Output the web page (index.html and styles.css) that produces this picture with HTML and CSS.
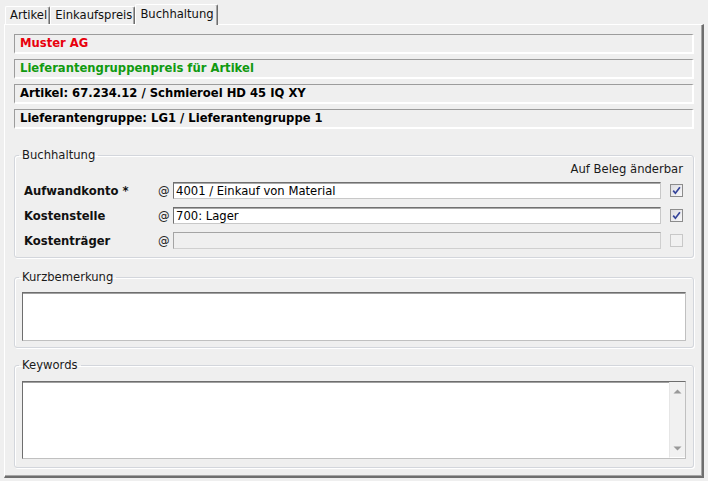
FILE: index.html
```html
<!DOCTYPE html>
<html lang="de">
<head>
    <meta charset="UTF-8">
    <title>Buchhaltung</title>
    <link rel="stylesheet" href="styles.css">
</head>
<body>
    <div class="tabs">
        <div class="tab">Artikel</div>
        <div class="tab">Einkaufspreis</div>
        <div class="tab tab-active">Buchhaltung</div>
    </div>

    <div class="panel">
        <div class="info info-red">Muster AG</div>
        <div class="info info-green">Lieferantengruppenpreis für Artikel</div>
        <div class="info">Artikel: 67.234.12 / Schmieroel HD 45 IQ XY</div>
        <div class="info">Lieferantengruppe: LG1 / Lieferantengruppe 1</div>

        <fieldset class="group group-booking">
            <legend>Buchhaltung</legend>
            <div class="booking-head">Auf Beleg änderbar</div>

            <div class="booking-row">
                <span class="booking-label">Aufwandkonto *</span>
                <span class="booking-at">@</span>
                <input class="field" type="text" value="4001 / Einkauf von Material">
                <span class="check check-on">
                    <svg width="11" height="11" viewBox="0 0 11 11"><path d="M2.2 5.6 L4.4 8.2 L8.9 2.2" fill="none" stroke="#34449a" stroke-width="1.7"/></svg>
                </span>
            </div>
            <div class="booking-row">
                <span class="booking-label">Kostenstelle</span>
                <span class="booking-at">@</span>
                <input class="field" type="text" value="700: Lager">
                <span class="check check-on">
                    <svg width="11" height="11" viewBox="0 0 11 11"><path d="M2.2 5.6 L4.4 8.2 L8.9 2.2" fill="none" stroke="#34449a" stroke-width="1.7"/></svg>
                </span>
            </div>
            <div class="booking-row">
                <span class="booking-label">Kostenträger</span>
                <span class="booking-at">@</span>
                <input class="field" type="text" value="" disabled>
                <span class="check check-off"></span>
            </div>
        </fieldset>

        <fieldset class="group group-note">
            <legend>Kurzbemerkung</legend>
            <textarea class="memo memo-short"></textarea>
        </fieldset>

        <fieldset class="group group-keywords">
            <legend>Keywords</legend>
            <div class="memo memo-scroll">
                <textarea class="memo-text"></textarea>
                <div class="scrollbar">
                    <svg width="9" height="5" viewBox="0 0 9 5"><path d="M0.5 4.5 L4.5 0.5 L8.5 4.5 Z" fill="#9a9a9a"/></svg>
                    <svg width="9" height="5" viewBox="0 0 9 5"><path d="M0.5 0.5 L4.5 4.5 L8.5 0.5 Z" fill="#9a9a9a"/></svg>
                </div>
            </div>
        </fieldset>
    </div>
</body>
</html>
```

FILE: styles.css
```css
* {
    margin: 0;
    padding: 0;
    box-sizing: border-box;
}

body {
    height: 100vh;
    display: flex;
    flex-direction: column;
    background: #efefef;
    font-family: "DejaVu Sans", Verdana, sans-serif;
    font-size: 11.6px;
    color: #000;
}

/* Reiter */
.tabs {
    display: flex;
    align-items: flex-end;
    height: 24px;
    padding: 4px 0 0 5px;
}

.tab {
    height: 18px;
    line-height: 16px;
    padding: 0 2px 0 4px;
    border-top: 1px solid #fff;
    border-left: 1px solid #fff;
    border-right: 1px solid #6e6e6e;
    box-shadow: inset -1px 0 0 #a6a6a6;
    border-radius: 2px 2px 0 0;
    color: #111;
}

.tab-active {
    height: 21px;
    margin-bottom: -1px;
    line-height: 18px;
    padding: 0 3px 0 4px;
    background: #efefef;
    position: relative;
    z-index: 1;
}

.panel {
    flex: 1;
    display: flex;
    flex-direction: column;
    margin: 0 4px 3px 4px;
    padding: 9px 8px 8px 9px;
    border-top: 1px solid #fff;
    border-left: 1px solid #fff;
    border-right: 2px solid #6e6e6e;
    border-bottom: 2px solid #6e6e6e;
    box-shadow: inset -1px -1px 0 #a6a6a6;
}

/* Kopfzeilen */
.info {
    height: 20px;
    line-height: 17px;
    margin-bottom: 5px;
    padding-left: 5px;
    border-top: 1px solid #9c9c9c;
    border-left: 1px solid #9c9c9c;
    border-right: 2px solid #fff;
    border-bottom: 2px solid #fff;
    font-weight: bold;
    white-space: nowrap;
}

.info-red {
    color: #e8000c;
}

.info-green {
    color: #109a10;
}

/* Gruppen */
.group {
    border: 1px solid #d3d6dc;
    border-radius: 3px;
    box-shadow: inset 1px 1px 0 #fff, 1px 1px 0 #fff;
    padding: 0 7px 8px 7px;
}

.group legend {
    margin-left: -3px;
    padding: 0 3px;
    line-height: 13px;
    color: #1a1a1a;
}

.group-booking {
    margin-top: 15px;
    padding: 1px 10px 8px 7px;
}

.booking-head {
    text-align: right;
    line-height: 13px;
    color: #1a1a1a;
    margin-bottom: 6px;
}

.booking-row {
    display: flex;
    align-items: center;
    height: 17px;
    margin-bottom: 8px;
}

.booking-row:last-child {
    margin-bottom: 0;
}

.booking-label {
    width: 136px;
    padding-left: 2px;
    font-weight: bold;
    color: #111;
}

.booking-at {
    width: 15px;
    color: #222;
}

.field {
    flex: 1;
    height: 17px;
    padding: 0 2px;
    font-family: inherit;
    font-size: 11.6px;
    color: #000;
    background: #fff;
    border: 1px solid;
    border-color: #707070 #c8c8c8 #c8c8c8 #707070;
    box-shadow: inset 0 1px 0 #a9a9a9;
    outline: none;
}

.field:disabled {
    background: #efefef;
    border-color: #a4a4a4 #cfcfcf #cfcfcf #a4a4a4;
    box-shadow: none;
}

.check {
    width: 13px;
    height: 13px;
    margin-left: 9px;
    display: flex;
    align-items: center;
    justify-content: center;
    border: 1px solid #8c8c8c;
    background: linear-gradient(135deg, #dcdce0, #f8f8fa);
}

.check-off {
    border-color: #c8c8c8;
    background: #f1f1f1;
}

/* Memofelder */
.memo {
    display: block;
    width: 100%;
    background: #fff;
    border: 1px solid;
    border-color: #6e6e6e #c0c0c0 #c0c0c0 #6e6e6e;
    box-shadow: inset 0 1px 0 #a0a0a0;
    font-family: inherit;
    font-size: 11.6px;
    resize: none;
    outline: none;
}

.group-note {
    margin-top: 13px;
    padding-bottom: 6px;
}

.group-note legend {
    margin-bottom: 8px;
}

.memo-short {
    height: 49px;
}

.group-keywords {
    flex: 1;
    display: flex;
    flex-direction: column;
    margin-top: 11px;
    padding-bottom: 8px;
}

.group-keywords legend {
    margin-bottom: 9px;
}

.memo-scroll {
    flex: 1;
    display: flex;
}

.memo-text {
    flex: 1;
    border: none;
    resize: none;
    outline: none;
    background: transparent;
    font-family: inherit;
    font-size: 11.6px;
}

.scrollbar {
    width: 16px;
    display: flex;
    flex-direction: column;
    justify-content: space-between;
    align-items: center;
    padding: 7px 0 6px 0;
    background: #f1f1f1;
    border-left: 1px solid #e6e6e6;
    border-bottom: 1px solid #fff;
}
```
